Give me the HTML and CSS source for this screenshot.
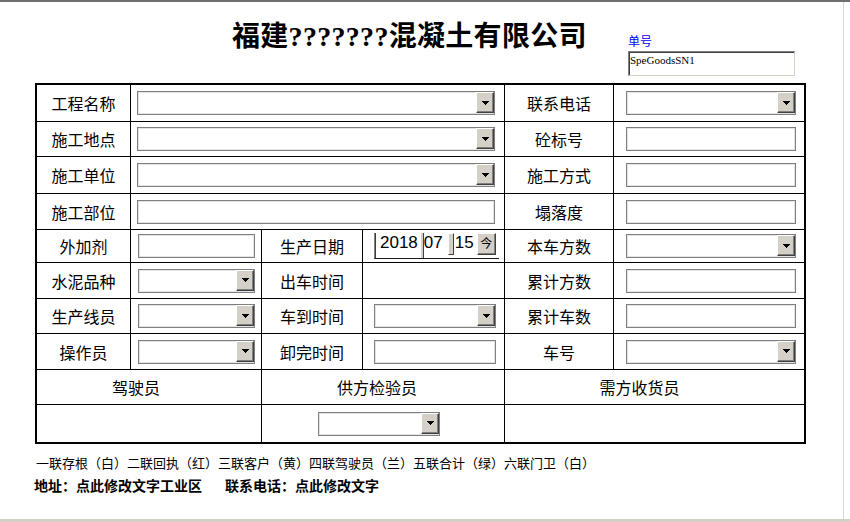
FILE: index.html
```html
<!DOCTYPE html>
<html lang="zh-CN">
<head>
<meta charset="utf-8">
<title>送货单</title>
<link rel="stylesheet" href="styles.css">
</head>
<body>
<div class="topbar"></div>
<div class="page">
  <header class="head">
    <h1 class="title">福建<span class="q">???????</span>混凝土有限公司</h1>
    <div class="sn">
      <div class="sn-label">单号</div>
      <div class="sn-box">SpeGoodsSN1</div>
    </div>
  </header>

  <div class="form">
    <!-- row 1 -->
    <div class="lbl">工程名称</div>
    <div class="span3"><div class="fld combo w-wide"><span class="btn"><svg width="7" height="4" viewBox="0 0 7 4"><path d="M0 0h7v1H0zM1 1h5v1H1zM2 2h3v1H2zM3 3h1v1H3z"/></svg></span></div></div>
    <div class="lbl">联系电话</div>
    <div><div class="fld combo w-right"><span class="btn"><svg width="7" height="4" viewBox="0 0 7 4"><path d="M0 0h7v1H0zM1 1h5v1H1zM2 2h3v1H2zM3 3h1v1H3z"/></svg></span></div></div>

    <!-- row 2 -->
    <div class="lbl">施工地点</div>
    <div class="span3"><div class="fld combo w-wide"><span class="btn"><svg width="7" height="4" viewBox="0 0 7 4"><path d="M0 0h7v1H0zM1 1h5v1H1zM2 2h3v1H2zM3 3h1v1H3z"/></svg></span></div></div>
    <div class="lbl">砼标号</div>
    <div><div class="fld w-right"></div></div>

    <!-- row 3 -->
    <div class="lbl">施工单位</div>
    <div class="span3"><div class="fld combo w-wide"><span class="btn"><svg width="7" height="4" viewBox="0 0 7 4"><path d="M0 0h7v1H0zM1 1h5v1H1zM2 2h3v1H2zM3 3h1v1H3z"/></svg></span></div></div>
    <div class="lbl">施工方式</div>
    <div><div class="fld w-right"></div></div>

    <!-- row 4 -->
    <div class="lbl">施工部位</div>
    <div class="span3"><div class="fld w-wide"></div></div>
    <div class="lbl">塌落度</div>
    <div><div class="fld w-right"></div></div>

    <!-- row 5 -->
    <div class="lbl">外加剂</div>
    <div><div class="fld w-b"></div></div>
    <div class="lbl">生产日期</div>
    <div>
      <div class="date">
        <span class="dn">2018</span><span class="dsep"></span><span class="dn">07</span><span class="dspin"></span><span class="dn d15">15</span><span class="dbtn">今</span>
      </div>
    </div>
    <div class="lbl">本车方数</div>
    <div><div class="fld combo w-right"><span class="btn"><svg width="7" height="4" viewBox="0 0 7 4"><path d="M0 0h7v1H0zM1 1h5v1H1zM2 2h3v1H2zM3 3h1v1H3z"/></svg></span></div></div>

    <!-- row 6 -->
    <div class="lbl">水泥品种</div>
    <div><div class="fld combo w-b"><span class="btn"><svg width="7" height="4" viewBox="0 0 7 4"><path d="M0 0h7v1H0zM1 1h5v1H1zM2 2h3v1H2zM3 3h1v1H3z"/></svg></span></div></div>
    <div class="lbl">出车时间</div>
    <div></div>
    <div class="lbl">累计方数</div>
    <div><div class="fld w-right"></div></div>

    <!-- row 7 -->
    <div class="lbl">生产线员</div>
    <div><div class="fld combo w-b"><span class="btn"><svg width="7" height="4" viewBox="0 0 7 4"><path d="M0 0h7v1H0zM1 1h5v1H1zM2 2h3v1H2zM3 3h1v1H3z"/></svg></span></div></div>
    <div class="lbl">车到时间</div>
    <div><div class="fld combo w-d"><span class="btn"><svg width="7" height="4" viewBox="0 0 7 4"><path d="M0 0h7v1H0zM1 1h5v1H1zM2 2h3v1H2zM3 3h1v1H3z"/></svg></span></div></div>
    <div class="lbl">累计车数</div>
    <div><div class="fld w-right"></div></div>

    <!-- row 8 -->
    <div class="lbl">操作员</div>
    <div><div class="fld combo w-b"><span class="btn"><svg width="7" height="4" viewBox="0 0 7 4"><path d="M0 0h7v1H0zM1 1h5v1H1zM2 2h3v1H2zM3 3h1v1H3z"/></svg></span></div></div>
    <div class="lbl">卸完时间</div>
    <div><div class="fld w-d"></div></div>
    <div class="lbl">车号</div>
    <div><div class="fld combo w-right"><span class="btn"><svg width="7" height="4" viewBox="0 0 7 4"><path d="M0 0h7v1H0zM1 1h5v1H1zM2 2h3v1H2zM3 3h1v1H3z"/></svg></span></div></div>

    <!-- row 9 -->
    <div class="lbl span2 sig-a">驾驶员</div>
    <div class="lbl span2 sig-b">供方检验员</div>
    <div class="lbl span2 sig-c">需方收货员</div>

    <!-- row 10 -->
    <div class="span2"></div>
    <div class="span2"><div class="fld combo w-sig"><span class="btn"><svg width="7" height="4" viewBox="0 0 7 4"><path d="M0 0h7v1H0zM1 1h5v1H1zM2 2h3v1H2zM3 3h1v1H3z"/></svg></span></div></div>
    <div class="span2"></div>
  </div>

  <p class="copies">一联存根（白）二联回执（红）三联客户（黄）四联驾驶员（兰）五联合计（绿）六联门卫（白）</p>
  <p class="addr"><span>地址：点此修改文字工业区</span><span class="tel">联系电话：点此修改文字</span></p>
</div>
<div class="bottombar"></div>
</body>
</html>
```

FILE: styles.css
```css
html, body {
  margin: 0;
  padding: 0;
}

body {
  width: 850px;
  height: 522px;
  overflow: hidden;
  background: #fff;
  color: #000;
  font-family: "Noto Sans CJK SC", sans-serif;
}

.topbar {
  height: 2px;
  background: #6f6f6f;
}

.page {
  width: 843px;
  height: 517px;
  border-right: 1px solid #d6d6d6;
}

/* header */
.head {
  display: grid;
  grid-template-columns: 628px 167px;
  height: 81px;
}

.title {
  margin: 18px 0 0;
  padding-left: 232px;
  font-size: 28px;
  line-height: 28px;
  font-weight: bold;
  letter-spacing: 0.3px;
  white-space: nowrap;
}

.title .q {
  font-family: "Liberation Serif", serif;
}

.sn {
  padding-top: 33px;
}

.sn-label {
  font-size: 12px;
  line-height: 12px;
  color: #0000ff;
}

.sn-box {
  margin-top: 4px;
  height: 25px;
  box-sizing: border-box;
  border-top: 1px solid #808080;
  border-left: 1px solid #808080;
  border-right: 1px solid #d4d0c8;
  border-bottom: 1px solid #d4d0c8;
  box-shadow: inset 1px 1px 0 #404040;
  padding: 2px 0 0 1px;
  font-family: "Liberation Serif", serif;
  font-size: 11px;
  line-height: 12px;
}

/* form grid */
.form {
  display: grid;
  grid-template-columns: 93px 130px 100px 141px 108px 190px;
  grid-template-rows: 36px 34px 36px 35px 32px 35px 34px 35px 34px 37px;
  gap: 1px;
  width: max-content;
  margin-left: 35px;
  background: #000;
  border: 2px solid #000;
}

.form > div {
  background: #fff;
  display: flex;
  align-items: center;
}

.lbl {
  justify-content: center;
  font-size: 16px;
  line-height: 20px;
  white-space: nowrap;
}

.span3 { grid-column: span 3; }
.span2 { grid-column: span 2; }

.sig-a { padding-right: 26px; }
.sig-b { padding-right: 12px; }
.sig-c { padding-right: 30px; }

/* fields */
.fld {
  box-sizing: border-box;
  height: 24px;
  border: 1px solid #7f7f7f;
  box-shadow: inset 0 0 0 1px #e4e4e4;
  background: #fff;
}

.combo {
  display: flex;
  justify-content: flex-end;
  align-items: flex-start;
}

.btn {
  box-sizing: border-box;
  width: 18px;
  height: 21px;
  background: #d4d0c8;
  border: 1px solid;
  border-color: #ffffff #404040 #404040 #ffffff;
  box-shadow: inset -1px -1px 0 #808080;
  display: flex;
  align-items: center;
  justify-content: center;
}

.btn svg {
  display: block;
  fill: #000;
}

.w-wide { width: 358px; margin-left: 6px; }
.w-right { width: 170px; margin-left: 12px; }
.w-b { width: 117px; margin-left: 7px; }
.w-d { width: 122px; margin-left: 11px; }
.w-sig { width: 122px; margin-left: 56px; }

/* date picker */
.date {
  box-sizing: border-box;
  width: 125px;
  height: 26px;
  margin-left: 11px;
  display: flex;
  align-items: flex-start;
  border-left: 1px solid #808080;
  border-bottom: 1px solid #1a1a1a;
  box-shadow: inset 1px 0 0 #404040;
  padding-left: 5px;
  font-family: "Liberation Sans", sans-serif;
  font-size: 17px;
  line-height: 20px;
}

.dn {
  display: block;
}

.dsep {
  box-sizing: border-box;
  width: 4px;
  height: 25px;
  margin-left: 2px;
  background: #d4d0c8;
  border-left: 1px solid #fff;
  border-right: 1px solid #404040;
}

.dspin {
  box-sizing: border-box;
  width: 6px;
  height: 22px;
  margin-left: 5px;
  background: #d4d0c8;
  border: 1px solid;
  border-color: #fff #404040 #404040 #fff;
}

.d15 {
  margin-left: 1px;
}

.dbtn {
  box-sizing: border-box;
  width: 19px;
  height: 22px;
  margin-left: 3px;
  background: #d4d0c8;
  border: 1px solid;
  border-color: #fff #404040 #404040 #fff;
  box-shadow: inset -1px -1px 0 #808080;
  font-family: "Noto Sans CJK SC", sans-serif;
  font-size: 12px;
  line-height: 18px;
  text-align: center;
}

/* footer */
.copies {
  margin: 12px 0 0 36px;
  font-size: 13px;
  line-height: 13px;
  white-space: nowrap;
}

.addr {
  margin: 9px 0 0 34px;
  font-size: 14px;
  line-height: 14px;
  font-weight: bold;
  white-space: nowrap;
}

.addr .tel {
  margin-left: 23px;
}

.bottombar {
  height: 3px;
  background: #d4d0c8;
}
```
